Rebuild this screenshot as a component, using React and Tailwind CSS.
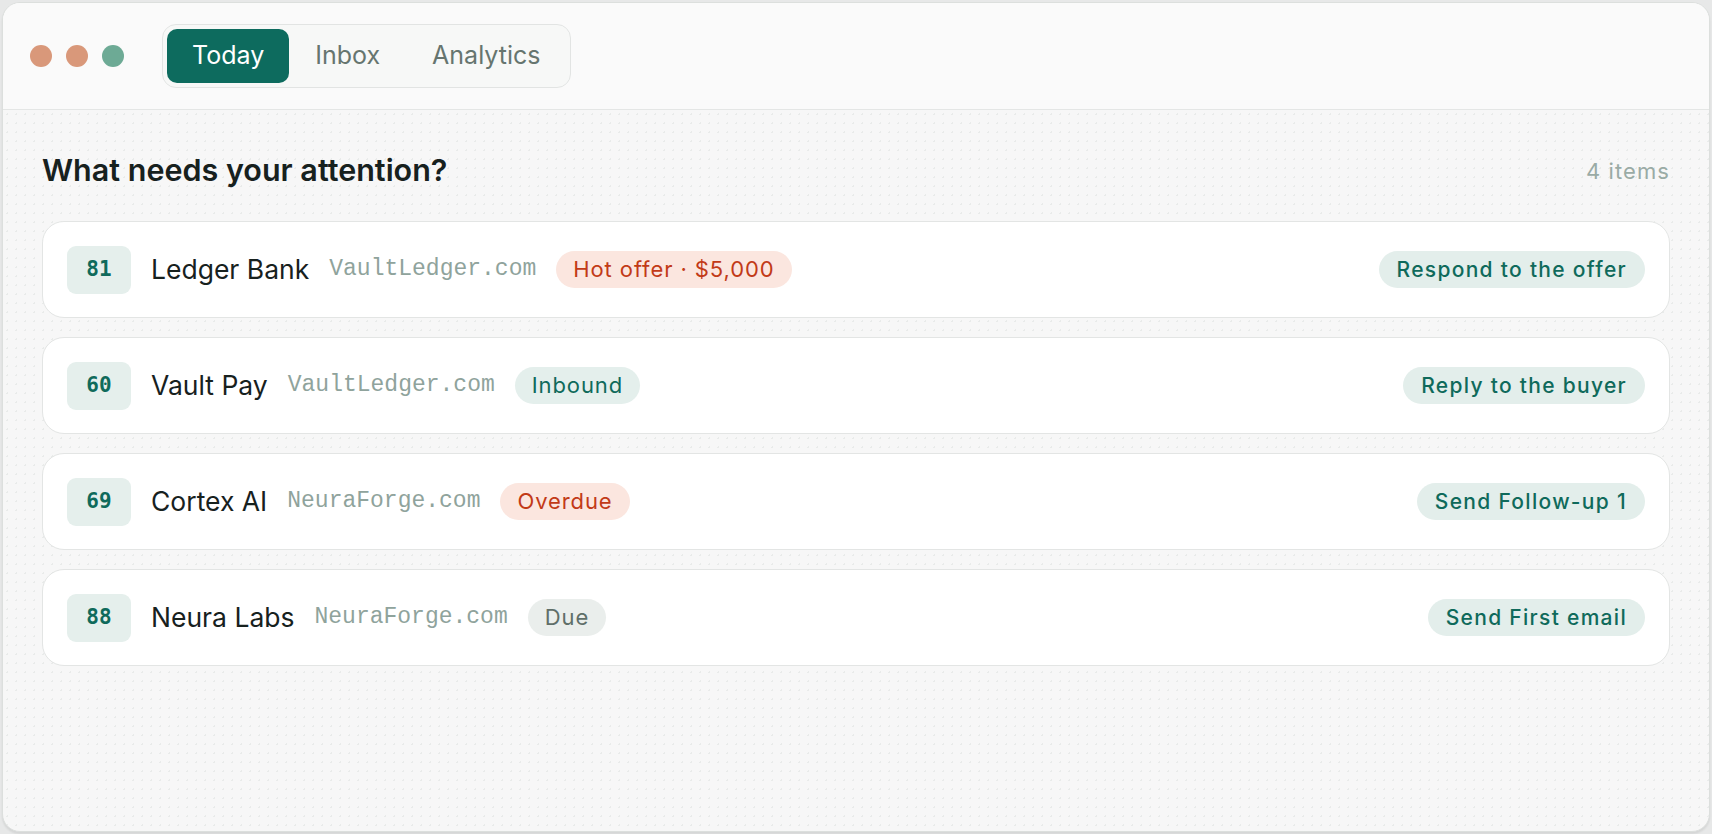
const tabs = ["Today", "Inbox", "Analytics"];

const items = [
  {
    score: 81,
    name: "Ledger Bank",
    domain: "VaultLedger.com",
    tag: "Hot offer · $5,000",
    tone: "hot",
    action: "Respond to the offer",
  },
  {
    score: 60,
    name: "Vault Pay",
    domain: "VaultLedger.com",
    tag: "Inbound",
    tone: "good",
    action: "Reply to the buyer",
  },
  {
    score: 69,
    name: "Cortex AI",
    domain: "NeuraForge.com",
    tag: "Overdue",
    tone: "hot",
    action: "Send Follow-up 1",
  },
  {
    score: 88,
    name: "Neura Labs",
    domain: "NeuraForge.com",
    tag: "Due",
    tone: "muted",
    action: "Send First email",
  },
];

const tagStyles = {
  hot: "bg-[#fbe6df] text-[#c23a17]",
  good: "bg-[#e4efec] text-[#0f6a5b]",
  muted: "bg-[#eaeeec] text-[#5f6f69]",
};

function Row({ item }) {
  return (
    <div className="flex items-center h-[97px] px-6 bg-white border border-[#e3e5e4] rounded-[22px]">
      <div className="w-16 h-12 shrink-0 rounded-[9px] bg-[#e5efec] flex items-center justify-center font-['DejaVu_Sans_Mono',monospace] font-bold text-[21px] text-[#0f6a5b]">
        {item.score}
      </div>
      <div className="ml-5 text-[26.5px] text-[#17211e]">{item.name}</div>
      <div className="ml-5 font-['Liberation_Mono',monospace] text-[23px] text-[#8fa39c]">
        {item.domain}
      </div>
      <div
        className={`ml-5 h-[37px] px-[17px] rounded-full flex items-center text-[22px] tracking-[0.9px] ${tagStyles[item.tone]}`}
      >
        {item.tag}
      </div>
      <div className="ml-auto h-[37px] px-[18px] rounded-full flex items-center bg-[#e3eeeb] text-[#0f6a5b] text-[21px] font-medium tracking-[1.3px]">
        {item.action}
      </div>
    </div>
  );
}

export default function App() {
  return (
    <div className="h-[834px] w-full bg-[#e7e8e8] p-[2px] font-['Inter','Noto_Sans',sans-serif]">
      <div className="h-full flex flex-col overflow-hidden rounded-[18px] border border-[#dcdfdd] bg-[#f7f7f7] shadow-[0_2px_2px_rgba(0,0,0,0.08)]">
        {/* title bar */}
        <div className="h-[107px] shrink-0 flex items-center pl-[27px] bg-[#fafafa] border-b border-[#e4e6e5]">
          <div className="flex items-center gap-[14px]">
            <span className="w-[22px] h-[22px] rounded-full bg-[#d9987a]" />
            <span className="w-[22px] h-[22px] rounded-full bg-[#d9987a]" />
            <span className="w-[22px] h-[22px] rounded-full bg-[#6daa95]" />
          </div>
          <div className="ml-[38px] flex items-center p-[4px] rounded-[14px] border border-[#e2e4e3] bg-[#f7f8f7]">
            {tabs.map((t, i) => (
              <button
                key={t}
                className={
                  i === 0
                    ? "h-[54px] px-[25px] rounded-[10px] bg-[#0d6b5e] text-white text-[25px]"
                    : "h-[54px] px-[26px] rounded-[10px] text-[#66756f] text-[25px]"
                }
              >
                {t}
              </button>
            ))}
          </div>
        </div>

        {/* attention list */}
        <div className="flex-1 px-[39px] pt-[35px] bg-[radial-gradient(#e9ebea_1px,transparent_1px)] bg-[length:9px_9px]">
          <div className="flex items-center justify-between h-[50px]">
            <h1 className="text-[30.5px] font-semibold text-[#17211e]">What needs your attention?</h1>
            <span className="text-[22px] tracking-[1.1px] text-[#9aaba5] pt-[3px]">4 items</span>
          </div>
          <div className="mt-[26px] flex flex-col gap-[19px]">
            {items.map((item) => (
              <Row key={item.name} item={item} />
            ))}
          </div>
        </div>
      </div>
    </div>
  );
}
